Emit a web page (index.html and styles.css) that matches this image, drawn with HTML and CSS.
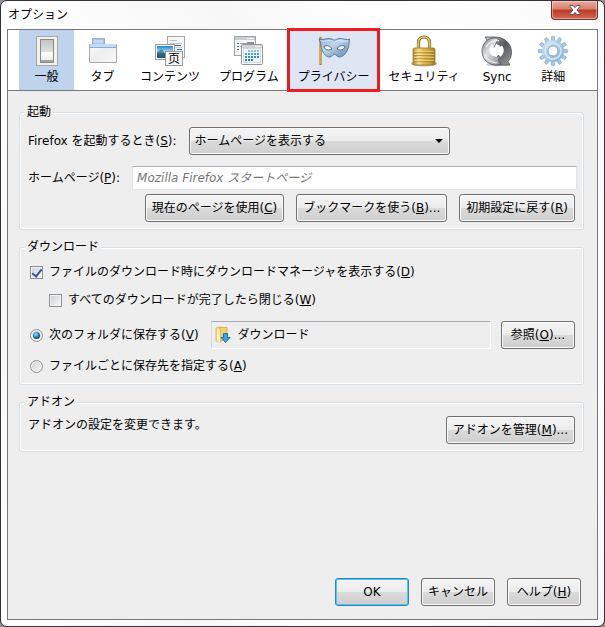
FILE: index.html
```html
<!DOCTYPE html>
<html lang="ja">
<head>
  <meta charset="UTF-8" />
  <meta name="viewport" content="width=device-width, initial-scale=1.0"/>
  <title>オプション</title>
  <link rel="stylesheet" href="styles.css">
</head>
<body>

  <div class="window">
    <header class="titlebar">
      <h1>オプション</h1>
      <button class="close" aria-label="閉じる">
        <svg width="12" height="10" viewBox="0 0 12 10"><path d="M1 .5h3.200L6 2.600 7.800.5H11v1L8 5l3 3.500v1H7.800L6 7.400 4.200 9.500H1v-1L4 5 1 1.500z" fill="#fff" stroke="#5c4650" stroke-width=".9"/></svg>
      </button>
    </header>

    <div class="dialog">
      <nav class="toolbar">
        <button class="tab selected">
          <svg viewBox="0 0 32 32">
            <defs>
              <linearGradient id="switch" x1="0" y1="0" x2="0" y2="1"><stop offset="0" stop-color="#c4c4c4"/><stop offset=".6" stop-color="#dedede"/><stop offset=".62" stop-color="#fff"/><stop offset="1" stop-color="#eee"/></linearGradient>
            </defs>
            <rect x="5.500" y="1.500" width="21" height="29" fill="#f1f1ef" stroke="#a9a9a6"/>
            <rect x="9" y="4" width="14" height="24" fill="#8a8a8a"/>
            <rect x="10" y="5" width="12" height="20" fill="url(#switch)"/>
            <path d="M10 25h12v2H10z" fill="#a5a5a5"/>
          </svg>
          <span>一般</span>
        </button>
        <button class="tab">
          <svg viewBox="0 0 32 32">
            <defs>
              <linearGradient id="folder" x1="0" y1="0" x2="1" y2="1"><stop offset="0" stop-color="#fff"/><stop offset=".5" stop-color="#eee"/><stop offset="1" stop-color="#f8f8f8"/></linearGradient>
            </defs>
            <path d="M2.500 27.500v-18h3v-6h12v6h12v18z" fill="url(#folder)" stroke="#a5abb3"/>
            <path d="M6 9V4h11v5z" fill="#bcdcf3" stroke="#8db4dc"/>
            <path d="M3 9h26v3H3z" fill="#c4dbf5"/>
            <path d="M3 12.500h26" stroke="#8fa9cd"/>
          </svg>
          <span>タブ</span>
        </button>
        <button class="tab">
          <svg viewBox="0 0 32 32">
            <defs>
              <linearGradient id="sky" x1="0" y1="0" x2="0" y2="1"><stop offset="0" stop-color="#1684d8"/><stop offset=".5" stop-color="#b5e2f8"/><stop offset=".65" stop-color="#367c82"/><stop offset="1" stop-color="#174f8c"/></linearGradient>
            </defs>
            <rect x="13.500" y="1.500" width="17" height="21" fill="#f8f8f8" stroke="#a6a6a6"/>
            <path d="M16 5.500h7M16 8.500h12" stroke="#bdbdbd"/>
            <path d="M17 10.500h10M23 14.500h5" stroke="#28699d"/>
            <path d="M20 12.500h8" stroke="#ccc"/>
            <rect x="1.500" y="9.500" width="19" height="15" fill="#fff" stroke="#9b9b9b"/>
            <rect x="3" y="11" width="16" height="12" fill="url(#sky)"/>
            <path d="M3 17l5-3 3 5 4-2 4 2v4H3z" fill="#245c71" opacity=".6"/>
            <rect x="11.500" y="16.500" width="17" height="14" fill="#f8f8f8" stroke="#999"/>
            <text x="20" y="28" text-anchor="middle" class="page-glyph">页</text>
          </svg>
          <span>コンテンツ</span>
        </button>
        <button class="tab">
          <svg viewBox="0 0 32 32">
            <rect x="1.500" y="1.500" width="21" height="19" fill="#f5f5f5" stroke="#9fa3a6"/>
            <path d="M2 2h20v3H2z" fill="#c9cdd0"/>
            <path d="M14 3.500h7" stroke="#f5f5f5"/>
            <path d="M4 8.500h2M4 11.500h2M4 14.500h2" stroke="#3c6e9b"/>
            <path d="M7 8.500h8M7 11.500h2" stroke="#9da5ab"/>
            <path d="M14 7h7v3h-7z" fill="#8e8e8e"/>
            <rect x="8.500" y="9.500" width="21" height="20" rx="1" fill="#fff" stroke="#8f979c" />
            <path d="M9 10h20v3H9z" fill="#ccd2d6"/>
            <path d="M22 11.500h6" stroke="#f6f6f6"/>
            <rect x="10.500" y="13.500" width="17" height="14" fill="#eef6fa" stroke="#d0dce2"/>
            <path d="M15 16h12" stroke="#7fc3df" stroke-width="2" stroke-dasharray="2 1"/>
            <path d="M12 19h15" stroke="#4ba6cf" stroke-width="2" stroke-dasharray="2 1"/>
            <path d="M12 22h15" stroke="#2c8fc0" stroke-width="2" stroke-dasharray="2 1"/>
            <path d="M12 25h9" stroke="#1c80b6" stroke-width="2" stroke-dasharray="2 1"/>
          </svg>
          <span>プログラム</span>
        </button>
        <button class="tab marked">
          <svg viewBox="0 0 32 32">
            <defs>
              <linearGradient id="mask" x1="0" y1="0" x2="1" y2="1"><stop offset="0" stop-color="#8fadc8"/><stop offset=".4" stop-color="#bdd6ec"/><stop offset="1" stop-color="#5d83a9"/></linearGradient>
            </defs>
            <path d="M2.500 2v28" stroke="#a87a1b" stroke-width="2.200"/>
            <path d="M2.200 3v26" stroke="#efc45a" stroke-width=".9"/>
            <path d="M1 4c4 1.500 6-.5 10-.5 3 0 4 1.500 5.500 1.500S19 3.500 22 3.500c4 0 6 2 10 .5-1.500 3-.5 8-3 12-1.800 3.500-4.500 6-7.500 6-2.500 0-3-2.500-5-2.500S14 22 11.500 22C8.500 22 6 19.500 4.500 16 2.500 12 3 7 1 4z" fill="url(#mask)" stroke="#52718f" stroke-width=".9"/>
            <path d="M3 6c3.500.8 6-.8 9-.5 2.500.3 3 1.500 4.500 1.500s2-1.200 4.500-1.500c3-.3 5.500 1.300 9 .5" fill="none" stroke="#e2eefa" stroke-width=".8"/>
            <path d="M6 11.500c3-1.500 6-1 8 2.500-3 1.500-7 1.500-8-2.500zM19 14c2-3.500 5-4 8-2.500-1 4-5 4-8 2.500z" fill="#f8fbff" stroke="#405e7d" stroke-width=".9"/>
          </svg>
          <span>プライバシー</span>
        </button>
        <button class="tab">
          <svg viewBox="0 0 32 32">
            <defs>
              <linearGradient id="brass" x1="0" y1="0" x2="1" y2="0"><stop offset="0" stop-color="#b08a28"/><stop offset=".25" stop-color="#f1dc8f"/><stop offset=".5" stop-color="#ddb84c"/><stop offset=".8" stop-color="#c39c32"/><stop offset="1" stop-color="#a17a1a"/></linearGradient>
            </defs>
            <ellipse cx="16" cy="28.500" rx="13" ry="3" fill="#8d8d99" opacity=".7"/>
            <path d="M10.500 15V7.500C10.500 4 13 2 16 2s5.500 2 5.500 5.500V15" fill="none" stroke="#8c6a18" stroke-width="3.200"/>
            <path d="M10.300 15V7.500C10.300 4 13 2 16 2s5.500 2 5.500 5.500V15" fill="none" stroke="#dfc36c" stroke-width="1.700"/>
            <rect x="5" y="13" width="22" height="17" rx="1.500" fill="url(#brass)" stroke="#a07b22" stroke-width=".8"/>
            <path d="M6 17.500h20M6 20.500h20M6 23.500h20M6 26.500h20" stroke="#94701a" opacity=".5"/>
            <path d="M6 16.500h20M6 19.500h20M6 22.500h20M6 25.500h20" stroke="#f4e3a4" opacity=".6"/>
          </svg>
          <span>セキュリティ</span>
        </button>
        <button class="tab">
          <svg viewBox="0 0 32 32">
            <defs>
              <linearGradient id="sync-l" x1="0" y1="0" x2="1" y2="1"><stop offset="0" stop-color="#77797c"/><stop offset=".4" stop-color="#dfe2e4"/><stop offset="1" stop-color="#8b8e91"/></linearGradient>
              <linearGradient id="sync-r" x1="0" y1="0" x2="1" y2="1"><stop offset="0" stop-color="#c9cccf"/><stop offset=".5" stop-color="#54585c"/><stop offset="1" stop-color="#999ca0"/></linearGradient>
            </defs>
            <ellipse cx="17" cy="29.500" rx="12" ry="1.800" fill="#999" opacity=".5"/>
            <path d="M4 2h10c9 0 16 6 16.500 14.500.2 4-1 7.500-3.500 10l2 3.500H16c-5 0-8-2-10-5 5 2 10 1 10-2v-2c5-1 7.500-6 5.500-10l-2 2-1-4-3 2-1.500-4C10 6 7 7 5 9l1-4z" fill="url(#sync-r)" stroke="#4f5255" stroke-width=".8"/>
            <path d="M14 3C6 3 1 9 1 16c0 8 6 14 14 14l5-1-3-3 2-5-4 1c-5-1-7-7-4-11l2 2 3-7 4 1c-2-2-4-4-6-4z" fill="url(#sync-l)" stroke="#5c5f62" stroke-width=".8"/>
            <path d="M5 12c3-5 8-7 13-6M4 20c2 5 7 8 12 7.500" fill="none" stroke="#f6f7f8" stroke-width="1.200" opacity=".8"/>
            <path d="M11 10l2 3 2.500-4.500 3 3.500 2.500-1.500c3 4 2 9-2 11.500l-1.500-3-2 3-4-1c-4-3-4-8-.5-11z" fill="#fff"/>
          </svg>
          <span>Sync</span>
        </button>
        <button class="tab">
          <svg viewBox="0 0 32 32">
            <defs>
              <linearGradient id="gear" x1="0" y1="0" x2="1" y2="1"><stop offset="0" stop-color="#c9dff1"/><stop offset="1" stop-color="#8db5d8"/></linearGradient>
              <path id="tooth" d="M14.200 6l.4-4.700h2.800l.4 4.700z"/>
            </defs>
            <g fill="#a9cae6" stroke="#7fa5c8" stroke-width=".6">
              <use href="#tooth"/>
              <use href="#tooth" transform="rotate(30 16 16)"/>
              <use href="#tooth" transform="rotate(60 16 16)"/>
              <use href="#tooth" transform="rotate(90 16 16)"/>
              <use href="#tooth" transform="rotate(120 16 16)"/>
              <use href="#tooth" transform="rotate(150 16 16)"/>
              <use href="#tooth" transform="rotate(180 16 16)"/>
              <use href="#tooth" transform="rotate(210 16 16)"/>
              <use href="#tooth" transform="rotate(240 16 16)"/>
              <use href="#tooth" transform="rotate(270 16 16)"/>
              <use href="#tooth" transform="rotate(300 16 16)"/>
              <use href="#tooth" transform="rotate(330 16 16)"/>
            </g>
            <circle cx="16" cy="16" r="8" fill="none" stroke="url(#gear)" stroke-width="6"/>
            <circle cx="16" cy="16" r="8" fill="none" stroke="#d7e8f6" stroke-width="1.500"/>
            <circle cx="16" cy="16" r="5" fill="#fff" stroke="#7fa5c8"/>
          </svg>
          <span>詳細</span>
        </button>
      </nav>

      <main class="panel">
        <fieldset class="startup">
          <legend>起動</legend>
          <div class="row">
            <label for="startup-page">Firefox を起動するとき(<u>S</u>):</label>
            <div class="select">
              <select id="startup-page">
                <option>ホームページを表示する</option>
                <option>空白ページを表示する</option>
              </select>
            </div>
          </div>
          <div class="row homepage">
            <label for="homepage">ホームページ(<u>P</u>):</label>
            <input type="text" id="homepage" placeholder="Mozilla Firefox スタートページ">
          </div>
          <div class="buttons">
            <button class="btn">現在のページを使用(<u>C</u>)</button>
            <button class="btn">ブックマークを使う(<u>B</u>)...</button>
            <button class="btn">初期設定に戻す(<u>R</u>)</button>
          </div>
        </fieldset>

        <fieldset class="downloads">
          <legend>ダウンロード</legend>
          <label class="choice"><input type="checkbox" checked>ファイルのダウンロード時にダウンロードマネージャを表示する(<u>D</u>)</label>
          <label class="choice indent"><input type="checkbox">すべてのダウンロードが完了したら閉じる(<u>W</u>)</label>
          <div class="row save-to">
            <label class="choice"><input type="radio" name="save" checked>次のフォルダに保存する(<u>V</u>)</label>
            <div class="folder">
              <svg width="16" height="18" viewBox="0 0 16 18">
                <path d="M1 2l5-1v15l-5-1z" fill="#f7e08c" stroke="#cfae50" stroke-width=".8"/>
                <path d="M5 1.500h7v13H5z" fill="#f2d26f" stroke="#cda849" stroke-width=".8"/>
                <path d="M2 3l3 1v12l-3-1z" fill="#fff0b5"/>
                <path d="M8.500 7.500h4v4h2.500l-4.500 5-4.500-5h2.500z" fill="#36a5ec" stroke="#1764a8" stroke-width=".9"/>
              </svg>
              <input type="text" aria-label="保存先フォルダ" value="ダウンロード" readonly>
            </div>
            <button class="btn">参照(<u>O</u>)...</button>
          </div>
          <label class="choice"><input type="radio" name="save">ファイルごとに保存先を指定する(<u>A</u>)</label>
        </fieldset>

        <fieldset class="addons">
          <legend>アドオン</legend>
          <div class="row">
            <p>アドオンの設定を変更できます。</p>
            <button class="btn">アドオンを管理(<u>M</u>)...</button>
          </div>
        </fieldset>
      </main>

      <footer class="buttons">
        <button class="btn default">OK</button>
        <button class="btn">キャンセル</button>
        <button class="btn">ヘルプ(<u>H</u>)</button>
      </footer>
    </div>
  </div>

</body>
</html>
```
FILE: styles.css
```css
:root {
  --face: #eeeeee;
  --line: #777777;
  --group-line: #d5dfe8;
  --mark: #ed1c24;
}

* {
  box-sizing: border-box;
}

body {
  margin: 0;
  background: #8f8f8f;
  color: #000;
  font-family: "DejaVu Sans", "Noto Sans CJK JP", sans-serif;
  font-size: 12px;
  line-height: 18px;
}

button, input, select {
  font: inherit;
  color: inherit;
}

p, h1 {
  margin: 0;
}

.window {
  display: flex;
  flex-direction: column;
  min-height: 100vh;
  padding: 0 6px 6px;
  border: 1px solid #333036;
  border-radius: 7px;
  background: linear-gradient(60deg, #fff 0%, #f6f6f6 20%, #fff 35%, #f7f7f7 60%, #fff 75%, #fafafa 100%);
}

.titlebar {
  display: flex;
  justify-content: space-between;
  align-items: flex-start;
  height: 28px;
}

.titlebar h1 {
  padding: 5px 0 0 1px;
  font-size: 12px;
  font-weight: normal;
}

.close {
  display: flex;
  justify-content: center;
  align-items: center;
  width: 47px;
  height: 19px;
  padding: 0;
  border: 1px solid #6b3134;
  border-top: none;
  border-radius: 0 0 4px 4px;
  background: linear-gradient(#e9a99b, #d8816f 45%, #bd3a22 50%, #cf6a50 100%);
  box-shadow: inset 0 0 0 1px rgba(255, 255, 255, 0.4);
}

.dialog {
  flex: 1;
  display: flex;
  flex-direction: column;
  border: 1px solid var(--line);
  background: var(--face);
}

/* category toolbar */
.toolbar {
  display: flex;
  gap: 1px;
  height: 61px;
  padding: 0 11px;
  border-bottom: 1px solid var(--line);
  background: #fff;
}

.tab {
  display: flex;
  flex-direction: column;
  align-items: center;
  gap: 1px;
  min-width: 55px;
  padding: 5px 9px 0;
  border: none;
  background: none;
  white-space: nowrap;
}

.tab svg {
  flex: none;
  width: 32px;
  height: 32px;
}

.tab.selected {
  background: #c0d3ed;
}

.tab.marked {
  background: #dfe6f3;
  outline: 3px solid var(--mark);
  outline-offset: -1px;
}

.page-glyph {
  font-family: "Noto Sans CJK SC", sans-serif;
  font-size: 12px;
}

/* group boxes */
.panel {
  display: flex;
  flex-direction: column;
  gap: 8px;
  padding: 12px 13px 20px 11px;
}

fieldset {
  min-width: 0;
  margin: 0;
  padding: 6px 6px 7px 8px;
  border: 1px solid var(--group-line);
  border-radius: 3px;
  box-shadow: inset 0 0 0 1px #fff;
}

legend {
  margin-left: -3px;
  padding: 0 2px;
  background: var(--face);
}

.row {
  display: flex;
  align-items: center;
  gap: 10px;
}

.row label {
  margin-right: 2px;
}

.buttons {
  display: flex;
  justify-content: flex-end;
  gap: 12px;
}

.btn {
  min-width: 74px;
  height: 28px;
  padding: 0 6px;
  border: 1px solid #707070;
  border-radius: 3px;
  background: linear-gradient(#f5f5f5, #ebebeb 50%, #dadada 50%, #cfcfcf);
  box-shadow: inset 0 0 0 1px #fbfbfb;
  white-space: nowrap;
}

.btn.default {
  border-color: #3c7fb1;
  box-shadow: inset 0 0 0 1px #43cbf5;
}

.select {
  position: relative;
  width: 261px;
}

.select select {
  display: block;
  width: 100%;
  height: 28px;
  padding: 0 20px 0 5px;
  border: 1px solid #707070;
  border-radius: 3px;
  background: linear-gradient(#f5f5f5, #ebebeb 50%, #dadada 50%, #cfcfcf);
  box-shadow: inset 0 0 0 1px #fbfbfb;
  appearance: none;
}

.select::after {
  content: "";
  position: absolute;
  top: 12px;
  right: 7px;
  border: 4px solid transparent;
  border-top-color: #000;
  border-bottom: none;
  pointer-events: none;
}

.homepage {
  margin: 11px 0 4px;
}

.homepage input {
  flex: 1;
  min-width: 0;
  height: 24px;
  padding: 0 4px;
  border: 1px solid #e2e3ea;
  border-top-color: #abadb3;
  background: #fff;
}

.homepage input::placeholder {
  color: #777;
  font-style: italic;
}

.startup .buttons {
  padding-right: 2px;
}

/* check boxes and radios */
.choice {
  display: flex;
  align-items: center;
  height: 20px;
  white-space: nowrap;
}

.choice input {
  display: grid;
  place-items: center;
  flex: none;
  width: 13px;
  height: 13px;
  margin: 0 6px 0 2px;
  border: 1px solid #8e8f8f;
  background: linear-gradient(135deg, #cbcfd5, #f7f7f7);
  box-shadow: inset 0 0 0 1px #f4f4f4;
  appearance: none;
}

.choice input[type="radio"] {
  border-radius: 50%;
}

.choice input[type="checkbox"]:checked::before {
  content: "";
  width: 4px;
  height: 8px;
  margin-bottom: 2px;
  border: solid #3b5797;
  border-width: 0 2px 2px 0;
  transform: rotate(38deg);
}

.choice input[type="radio"]:checked::before {
  content: "";
  width: 7px;
  height: 7px;
  border-radius: 50%;
  background: radial-gradient(circle at 40% 35%, #9be3fa, #1f80b5 45%, #0d3354 80%);
}

.downloads {
  padding-bottom: 8px;
}

.indent {
  margin: 8px 0 11px 19px;
}

.save-to {
  margin-bottom: 7px;
  padding-right: 2px;
}

.folder {
  flex: 1;
  display: flex;
  align-items: center;
  gap: 7px;
  min-width: 0;
  height: 28px;
  padding: 0 3px;
  border: 1px solid #fff;
  border-top-color: #abadb3;
  border-left-color: #d8d9df;
}

.folder input {
  flex: 1;
  min-width: 0;
  padding: 0;
  border: none;
  background: none;
}

.addons {
  padding-top: 5px;
}

.addons .row {
  justify-content: space-between;
  align-items: flex-start;
  padding-right: 2px;
}

footer.buttons {
  margin-top: auto;
  padding: 0 16px 13px;
}
```
